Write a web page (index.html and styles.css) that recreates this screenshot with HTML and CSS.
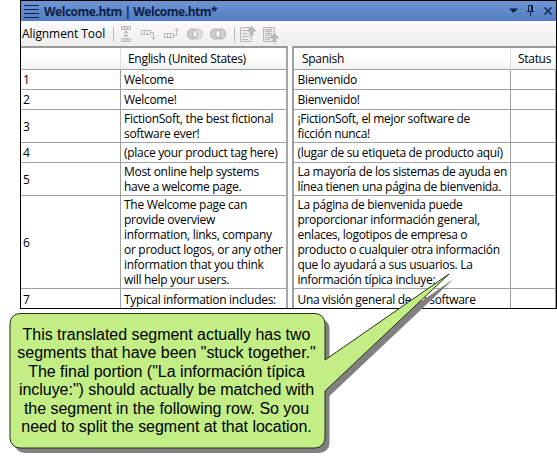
FILE: index.html
```html
<!DOCTYPE html>
<html lang="en">
<head>
<meta charset="utf-8">
<title>Alignment Tool</title>
<link rel="stylesheet" href="styles.css">
</head>
<body>
<main class="window">
  <header class="titlebar">
    <svg class="grip" width="15" height="13" viewBox="0 0 15 13"><path d="M0 .5h15M0 4.5h15M0 8.5h15M0 12.5h15" stroke="#0d2450" fill="none"/></svg>
    <h1 class="title">Welcome.htm | Welcome.htm*</h1>
    <svg class="controls" width="44" height="12" viewBox="0 0 44 12" fill="none" stroke="#0c2148">
      <path d="M0 3.500h9L4.500 8z" fill="#0c2148" stroke="none"/>
      <path d="M19.500 6.500v-6h4v6M22.500 0v6M18 6.500h7M21.500 7v4"/>
      <path d="M35.500 2.500l7 7M42.500 2.500l-7 7" stroke-width="1.300"/>
    </svg>
  </header>
  <div class="toolbar">
    <span class="toolname">Alignment Tool</span>
    <svg class="tools" width="167" height="18" viewBox="0 0 167 18" fill="none" stroke="#bababa">
      <path d="M.5 2v15M121.500 2v15"/>
      <path d="M8.500 1.500h9v3h-9zM11.500 1.500v3M14.500 1.500v3M8.500 13.500h9v3h-9zM11.500 13.500v3M14.500 13.500v3" fill="#e6e6e6"/>
      <path d="M13 6v6M11 8l2-2 2 2M11 10l2 2 2-2" stroke="#adadad"/>
      <path d="M28.500 5.500h9v4h-9zM31.500 5.500v4M34.500 5.500v4M38 7.500h2.500v7M38.500 12.500l2 2 2-2"/>
      <path d="M51.500 8.500h9v4h-9zM54.500 8.500v4M57.500 8.500v4M61 10.500h2.500v-7M61.500 5.500l2-2 2 2"/>
      <g stroke-width="1.300"><circle cx="79.500" cy="9" r="5" fill="#cfcfcf"/><circle cx="84.500" cy="9" r="5" fill="#dedede" stroke="#d2d2d2"/><path d="M82 4.700a5 5 0 0 1 0 8.600a5 5 0 0 1 0-8.600" fill="#f0f0f0"/></g>
      <g stroke-width="1.300"><circle cx="102.500" cy="9" r="5" fill="#cfcfcf"/><circle cx="107.500" cy="9" r="5" fill="#cfcfcf"/><path d="M105 4.700a5 5 0 0 1 0 8.600a5 5 0 0 1 0-8.600" fill="#f4f4f4"/></g>
      <path d="M127.500 2.500h11v14h-11z" fill="#ececec"/><path d="M129 5.500h6M129 8.500h5M129 11.500h8M129 14.500h6"/><path d="M137 10V6h-3l4.500-4.500L143 6h-3v4z" fill="#b8b8b8"/>
      <path d="M150.500 2.500h11v14h-11z" fill="#ececec"/><path d="M152.500 4.500h6v2h-6zM152.500 8.500h6v2h-6zM152.500 12.500h4v2h-4zM155.500 4v7"/><path d="M160 17v-4h-3l4.500-4.500L166 13h-3v4z" fill="#b8b8b8"/>
    </svg>
  </div>
  <div class="panes">
    <section class="pane source">
      <div class="cell head"></div><div class="cell head">English (United States)</div>
      <div class="cell num">1</div><div class="cell">Welcome</div>
      <div class="cell num">2</div><div class="cell">Welcome!</div>
      <div class="cell num">3</div><div class="cell">FictionSoft, the best fictional<br>software ever!</div>
      <div class="cell num">4</div><div class="cell">(place your product tag here)</div>
      <div class="cell num">5</div><div class="cell">Most online help systems<br>have a welcome page.</div>
      <div class="cell num">6</div><div class="cell">The Welcome page can<br>provide overview<br>information, links, company<br>or product logos, or any other<br>information that you think<br>will help your users.</div>
      <div class="cell num">7</div><div class="cell">Typical information includes:</div>
    </section>
    <section class="pane target">
      <div class="cell head">Spanish</div><div class="cell head">Status</div>
      <div class="cell">Bienvenido</div><div class="cell"></div>
      <div class="cell">Bienvenido!</div><div class="cell"></div>
      <div class="cell">¡FictionSoft, el mejor software de<br>ficción nunca!</div><div class="cell"></div>
      <div class="cell">(lugar de su etiqueta de producto aquí)</div><div class="cell"></div>
      <div class="cell">La mayoría de los sistemas de ayuda en<br>línea tienen una página de bienvenida.</div><div class="cell"></div>
      <div class="cell">La página de bienvenida puede<br>proporcionar información general,<br>enlaces, logotipos de empresa o<br>producto o cualquier otra información<br>que lo ayudará a sus usuarios. La<br>información típica incluye:</div><div class="cell"></div>
      <div class="cell">Una visión general de su software</div><div class="cell"></div>
    </section>
  </div>
</main>
<aside class="callout">
  <svg class="bubble" width="557" height="200" viewBox="0 263 557 200">
    <path transform="translate(4.500 5)" fill="#808080" d="M20 313.500H315a10 10 0 0 1 10 10V360L449 274 325 391V438a10 10 0 0 1-10 10H20a10 10 0 0 1-10-10V323.500a10 10 0 0 1 10-10z"/>
    <path fill="#c2ee85" stroke="#283018" d="M20 313.500H315a10 10 0 0 1 10 10V360L449 274 325 391V438a10 10 0 0 1-10 10H20a10 10 0 0 1-10-10V323.500a10 10 0 0 1 10-10z"/>
  </svg>
  <p class="note">This translated segment actually has two<br>segments that have been "stuck together."<br>The final portion ("La información típica<br>incluye:") should actually be matched with<br>the segment in the following row. So you<br>need to split the segment at that location.</p>
</aside>
</body>
</html>
```
FILE: styles.css
```css
* { box-sizing: border-box; }
body { margin: 0; background: #fff; color: #000; width: 557px; height: 463px; overflow: hidden; position: relative; }
.window { margin-left: 20px; width: 537px; height: 309px; border: 1px solid #000; font: 12px/15px "Open Sans", "Noto Sans", sans-serif; white-space: nowrap; overflow: hidden; }
.titlebar { height: 20px; display: flex; align-items: center; padding: 0 3px 0 3px; background: linear-gradient(#7095d4, #527dc2); }
.title { margin: 0 auto 0 5px; font-size: 12px; font-weight: 700; color: #0c2148; letter-spacing: -0.48px; }
.toolbar { height: 25px; display: flex; align-items: center; gap: 7px; padding-left: 1px; background: linear-gradient(#fafafa, #eee); }
.toolname { width: 84px; letter-spacing: -0.08px; }
.panes { display: flex; justify-content: space-between; height: 262px; }
.pane { display: grid; grid-template-rows: 22px 20px 20px 33px 20px 33px 93px 21px; border-top: 2px solid #9b9b9f; }
.source { width: 267px; grid-template-columns: 100px 1fr; border-right: 2px solid #a6a6a9; letter-spacing: -0.29px; }
.target { width: 264px; grid-template-columns: 217px 1fr; border-left: 2px solid #a0a0a3; letter-spacing: -0.32px; }
.cell { display: flex; align-items: center; padding-left: 3px; border-right: 1px solid #a0a0a0; border-bottom: 1px solid #a0a0a0; }
.source .cell:nth-child(even) { border-right: 0; }
.target .cell { padding-left: 3.5px; }
.num { padding-left: 2px; }
.head { padding-left: 7px; background: linear-gradient(#fff 40%, #f0f1f3); border-right-color: #dedfe1; letter-spacing: -0.3px; }
.target .head { padding-left: 8px; }
.target .head:nth-child(2) { padding-left: 7px; }
.callout { position: absolute; inset: 0; }
.bubble { position: absolute; left: 0; bottom: 0; }
.note { position: absolute; left: 9px; top: 326px; width: 315px; margin: 0; font: 16px/18.4px "Liberation Sans", Arial, sans-serif; letter-spacing: -0.03px; text-align: center; white-space: nowrap; }
```
